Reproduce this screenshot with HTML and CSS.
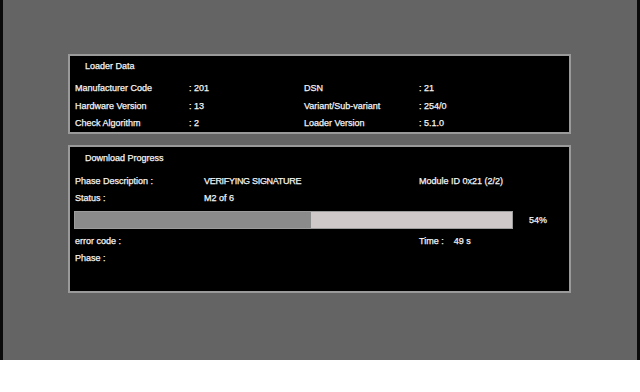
FILE: index.html
```html
<!DOCTYPE html>
<html>
<head>
<meta charset="utf-8">
<link rel="stylesheet" href="styles.css">
</head>
<body>
<div class="screen">
  <section class="panel loader">
    <div class="title">Loader Data</div>
    <div class="grid4">
      <span>Manufacturer Code</span><span>: 201</span><span>DSN</span><span>: 21</span>
      <span>Hardware Version</span><span>: 13</span><span>Variant/Sub-variant</span><span>: 254/0</span>
      <span>Check Algorithm</span><span>: 2</span><span>Loader Version</span><span>: 5.1.0</span>
    </div>
  </section>
  <section class="panel progress">
    <div class="title">Download Progress</div>
    <div class="grid3 first">
      <span>Phase Description :</span><span class="upper">VERIFYING SIGNATURE</span><span>Module ID 0x21 (2/2)</span>
      <span>Status :</span><span>M2 of 6</span><span></span>
    </div>
    <div class="barrow">
      <div class="bar"><div class="fill" style="width:54%"></div></div>
      <span class="pct">54%</span>
    </div>
    <div class="grid3b">
      <span>error code :</span><span class="time"><span>Time :</span><span>49 s</span></span>
      <span>Phase :</span><span></span>
    </div>
  </section>
</div>
</body>
</html>
```
FILE: styles.css
```css
html, body {
  margin: 0;
  padding: 0;
  background: #ffffff;
}
.screen {
  width: 640px;
  height: 360px;
  box-sizing: border-box;
  background: #646464;
  border-left: 3px solid #0a0a0a;
  border-right: 3px solid #0a0a0a;
  padding: 54px 0 0 65px;
  display: flex;
  flex-direction: column;
  gap: 11px;
  font-family: "Liberation Sans", Arial, sans-serif;
  font-size: 9px;
  color: #f4f4f4;
  -webkit-text-stroke: 0.25px #f4f4f4;
}
.panel {
  width: 503px;
  box-sizing: border-box;
  background: #000;
  border: 2px solid #9a9a9a;
  padding-left: 5px;
}
.loader {
  height: 80px;
  padding-top: 1.5px;
}
.progress {
  height: 148px;
  padding-top: 2.5px;
}
.title {
  line-height: 17px;
  padding-left: 10px;
}
.grid4 {
  margin-top: 5px;
  display: grid;
  grid-template-columns: 114px 115px 115px 1fr;
  grid-auto-rows: 17.5px;
  align-items: center;
}
.grid3 {
  margin-top: 6px;
  display: grid;
  grid-template-columns: 129px 215px 1fr;
  grid-auto-rows: 17px;
  align-items: center;
}
.upper {
  letter-spacing: -0.3px;
}
.barrow {
  margin-top: 4.5px;
  display: flex;
  align-items: center;
}
.bar {
  width: 439px;
  height: 18px;
  box-sizing: border-box;
  border: 1px solid #9c9c9c;
  background: #cec8c8;
  margin-left: -1px;
}
.fill {
  height: 100%;
  background: #8b8b8b;
}
.pct {
  margin-left: 16px;
}
.grid3b {
  margin-top: 3px;
  display: grid;
  grid-template-columns: 344px 1fr;
  grid-auto-rows: 17.5px;
  align-items: center;
}
.time {
  display: flex;
  gap: 10px;
}
```
